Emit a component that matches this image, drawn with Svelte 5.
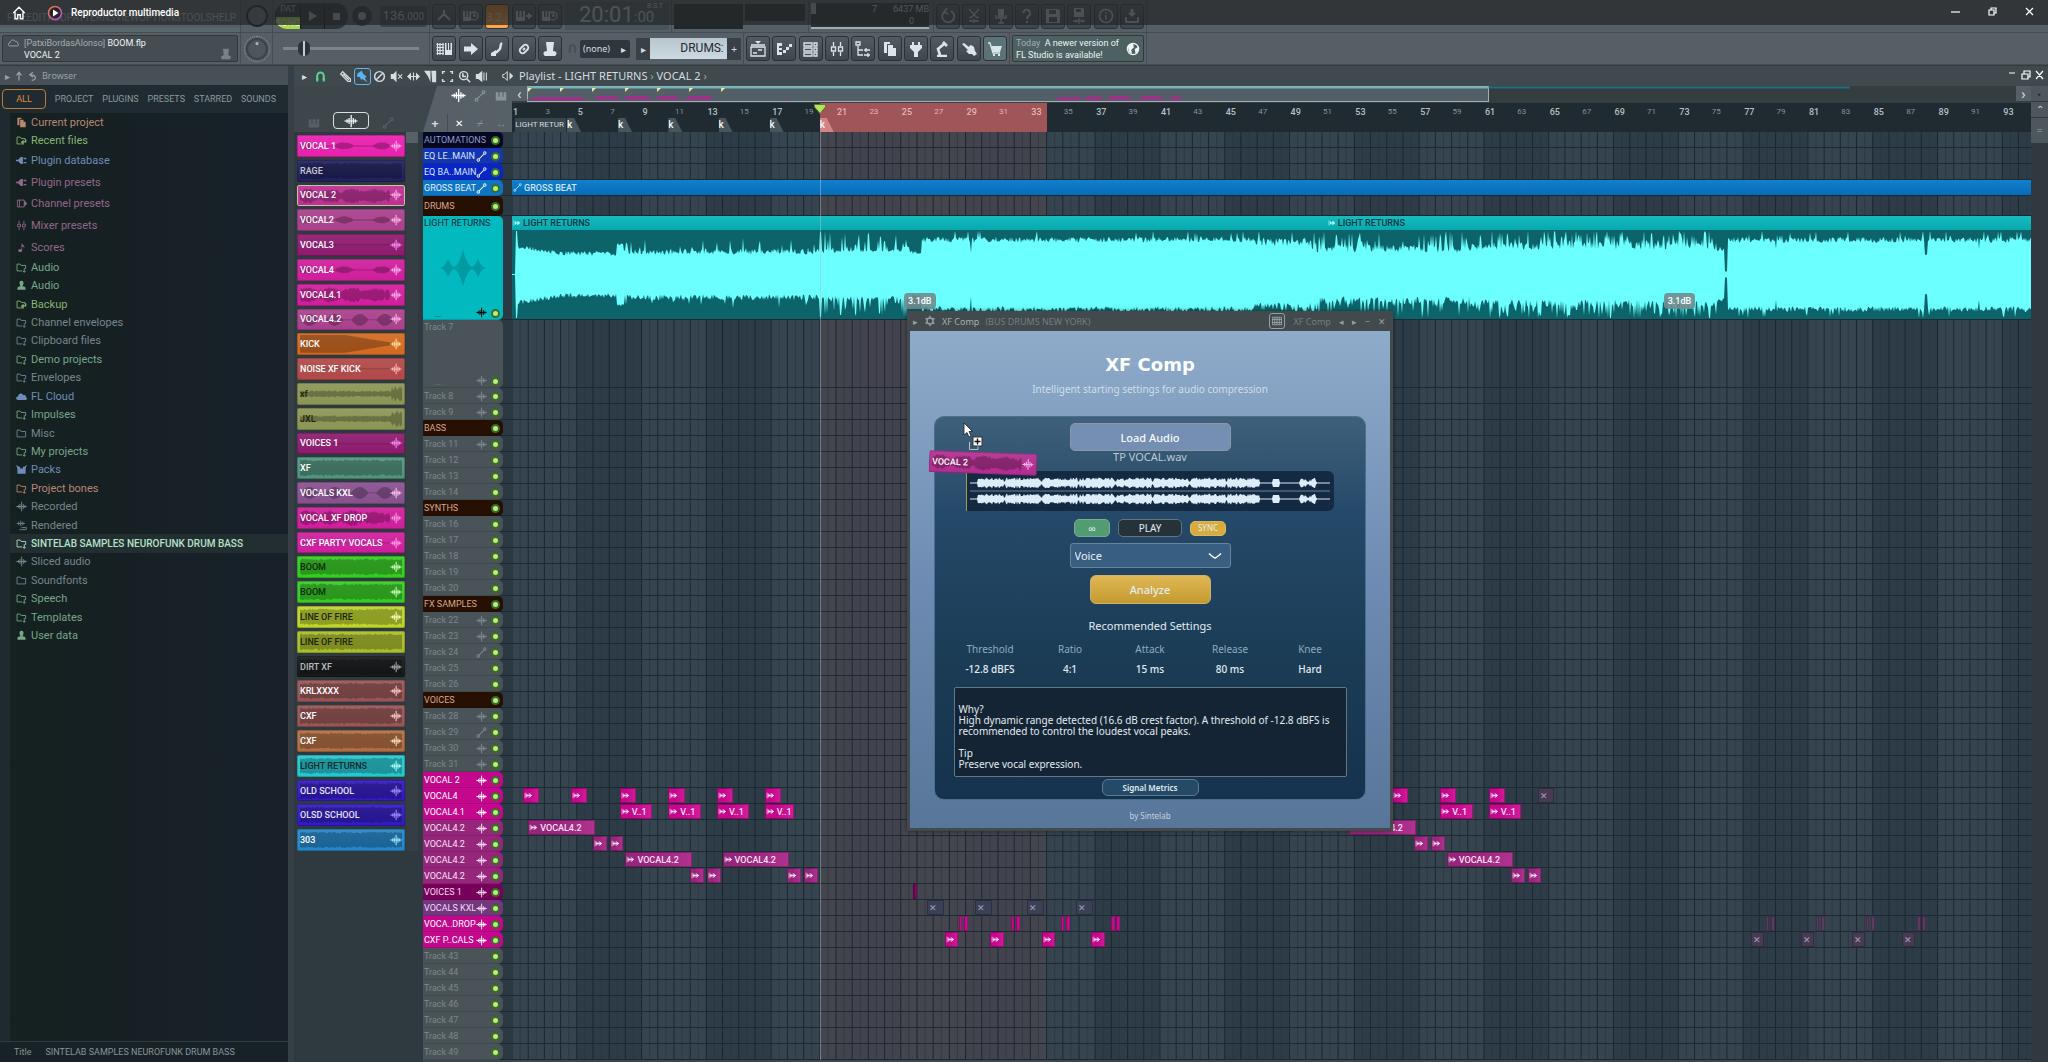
<script>
	const BARS = 93.77;
	const pct = (bars) => (bars / BARS) * 100 + '%';

	// s = stroked path, f = filled path, all on a 16 x 16 box
	const icons = {
		wave: { s: 'M0.5 8H15.5M3.5 6V10M5.800 4.500V11.500M8.200 1V15M10.600 4.500V11.500M12.900 6V10', w: 1.4 },
		node: { s: 'M4.5 11.5L11.5 4.5M1.5 13a1.8 1.8 0 1 0 3.6 0a1.8 1.8 0 1 0-3.6 0M11 3a1.8 1.8 0 1 0 3.6 0a1.8 1.8 0 1 0-3.6 0', w: 1.5 },
		piano: { f: 'M1 3H4.5V9H6V3H10V9H11.5V3H15V14H1Z' },
		pages: { f: 'M2 1H8V3H5V12H2ZM6 4H11V7H14V15H6Z' },
		recent: { s: 'M11 13H1.5V3H6L7.5 5H13V7', f: 'M15 6V11H11V14L7 10L11 7V9H13V6Z' },
		plug: { f: 'M0 7H3L7 3H10V13H7L3 9H0ZM11 4H15V6H11ZM11 10H15V12H11Z' },
		channel: { s: 'M2 3H12V13H2ZM5 3V13', f: 'M12 5H14L16 8L14 11H12Z' },
		mixer: { s: 'M4.5 1V5M2.5 6H6.5V10H2.5ZM4.5 11V15M11.5 1V5M9.5 6H13.5V10H9.5ZM11.5 11V15' },
		note: { f: 'M8 1C9 4 13 5 12 9C11 7 10 6.500 9 6.500V12C9 16 3 15 3 12.500C3 10.500 6 10 8 11Z' },
		folder: { s: 'M1.500 13V3H6L7.500 5H14V10M1.500 13H9M12 9V15M10 13L12 15L14 13' },
		plain: { s: 'M1.500 13V3H6L7.500 5H14V13Z' },
		user: { f: 'M8 1C11 1 11.500 4 10.500 6.500L9.500 9C13 9.500 14 10 14 14H2C2 10 3 9.500 6.500 9L5.500 6.500C4.500 4 5 1 8 1Z' },
		cloud: { f: 'M3 13C-1 13-0.500 8 3 8C3 3 9 2 10.500 6C14 5 15 8 14.500 9C17 10 16 13 14 13Z' },
		outline: { s: 'M3 13C-0.500 13-0.500 8.500 3 8.500C3 4 9 3 10.500 6.500C14 5.500 15 9 14 9.500C16 10.500 15.500 13 14 13Z' },
		packs: { f: 'M0 1L4 4H12L16 1L14 6V14H2V6ZM6 4V7L8 6L10 7V4Z' },
		render: { s: 'M1 5H13M4 2.500V7.500M7 1V9M10 2.500V7.500M5 14H15V11H8' },
		magnet: { s: 'M4 14V7A4 4 0 0 1 12 7V14M2.500 11H5.500M10.500 11H13.500', w: 2.5 },
		pencil: { s: 'M2 5L4.500 2L14 11V14H11ZM4 7L7 4M5 5L12 12', w: 1.6 },
		brush: { f: 'M2 4L7 1L9 5L13 8L11 10L14 15L8 11L6 12L5 9L1 8Z' },
		ban: { s: 'M2 8A6 6 0 1 0 14 8A6 6 0 1 0 2 8M4 12L12 4', w: 1.8 },
		mute: { f: 'M1 5H4L8 1V15L4 11H1Z', s: 'M10 5.500L15 10.500M15 5.500L10 10.500' },
		slip: { f: 'M0 8L5 3V13ZM16 8L11 3V13Z', s: 'M4 8H12M8 3V13' },
		slice: { f: 'M0 1H8V15L5 8ZM9 1H15V15H10Z' },
		select: { s: 'M2 5V2H5M11 2H14V5M14 11V14H11M5 14H2V11', w: 1.8 },
		zoom: { s: 'M2 7A5 5 0 1 0 12 7A5 5 0 1 0 2 7M11 11L15 15', f: 'M7 4V7H10V9H5V4Z', w: 1.8 },
		sound: { f: 'M1 5H4L9 1V15L4 11H1Z', s: 'M11 3V13M14 3V13' },
		speaker: { s: 'M1 6H3L7 2V14L3 10H1Z', f: 'M10 3L15 8L10 13Z' },
		up: { s: 'M8 15V3M4 7L8 2L12 7', w: 2 },
		back: { s: 'M6 15C14 14 14 6 4 6M8 2L3 6L8 10', w: 2 },
		kbd: { s: 'M0.500 3.500H8M0.500 6.500H8M0.500 9.500H8M0.500 12.500H8M1.500 2V14M4 2V14M7 2V14', f: 'M9 2H10.500V9H12V2H13V9H14.500V2H16V14H9Z', w: 1.2 },
		arrow: { f: 'M1 5.500H8V2L15 8L8 14V10.500H1Z' },
		slide: { s: 'M13 2C10 4 13 7 10 9C8 10 9 11 6 12', f: 'M7 9V15H2V12Z', w: 2.4 },
		link: { s: 'M7 9L9 7M6 6L4 8A3 3 0 0 0 8 12L10 10M10 10L12 8A3 3 0 0 0 8 4L6 6', w: 1.8 },
		hat: { f: 'M4 1H12L11 10C15 10 15.500 13 13 15H3C0.500 13 1 10 5 10Z' },
		metro: { s: 'M8 2V8M2 12L8 6L14 12', w: 2 },
		clock: { f: 'M0 3H2V9H3.500V3H5V9H6.500V3H8V13H0Z', s: 'M7 8A4 4 0 1 0 15 8A4 4 0 1 0 7 8M11 5V8H13' },
		addkey: { f: 'M0 3H2V9H3.500V3H5.500V9H7V3H9V13H0Z', s: 'M10 8H16M13 5V11', w: 1.8 },
		undo: { s: 'M4 4A6 6 0 1 0 11 3M7 0L4 4L8 6', w: 1.8 },
		cut: { s: 'M3 1L10 9M13 1L6 9M3 9.500H6M10 9.500H13M3 13H13M8 11V15M5 12V14M11 12V14' },
		savenew: { f: 'M3 0H12L13 1V9H3ZM5 1V4H10V1Z', s: 'M2 13H14M8 10V16M5 11.500V14.500M11 11.500V14.500' },
		mic: { f: 'M5 1H11V9H5Z', s: 'M3 7V10H13V7M8 10V15M5 15H11', w: 1.6 },
		help: { s: 'M4.500 5C4.500 0 12 1 11 6C10.500 8 8 8 8 11M8 13V15', w: 2 },
		save: { f: 'M1 1H13L15 3V15H1ZM4 2V6H11V2ZM4 9V14H12V9Z' },
		info: { s: 'M1.500 8A6.500 6.500 0 1 0 14.500 8A6.500 6.500 0 1 0 1.500 8M8 7V12M8 4V5.500', w: 1.6 },
		down: { f: 'M6.500 1H9.500V5H12L8 9L4 5H6.500Z', s: 'M2 9V14H14V9', w: 2 },
		plist: { s: 'M1 6H15V15H1ZM1 4H15M3 12H7M8 9H12', f: 'M5 0H11L8 3Z' },
		proll: { f: 'M1 2H6V5H3V7H6V9H3V11H6V14H1ZM7 9H10V12H7ZM10 6H13V9H10ZM13 3H16V6H13Z' },
		rack: { s: 'M1 2H9V5H1ZM1 7H9V10H1ZM1 12H9V15H1ZM11 2H14V5H11ZM11 7H14V10H11ZM11 12H14V15H11Z' },
		tree: { s: 'M1 1H5V4H1ZM3 5V14H8M3 9H8M9 9H15M11 7V11M9 14H15M13 12V16' },
		socket: { f: 'M4 1H6V4H10V1H12V4H14V7L10 11V16H6V11L2 7V4H4Z' },
		lamp: { s: 'M3 15H13M6 14L4 8L10 3M9 1L13 5', w: 2.6 },
		hand: { f: 'M1 3L3 2L8 6L9 4L11 4.500L13 6L14 10L16 13L13 15L11 13L8 13L5 10L7 9Z' },
		cart: { f: 'M4 5H15L13 11H6ZM6 13H8V15H6ZM11 13H13V15H11Z', s: 'M1 2H3L6 12H13' },
		globe: { s: 'M1.500 8A6.500 6.500 0 1 0 14.500 8A6.500 6.500 0 1 0 1.500 8', f: 'M2 4L8 1.500L9 6L6 9L7 14L3 11ZM10 8L14.500 5V10L11 14Z' },
		gear: { s: 'M4 8A4 4 0 1 0 12 8A4 4 0 1 0 4 8M8 1V4M8 12V15M2 4.500L4.500 6M11.500 10L14 11.500M2 11.500L4.500 10M11.500 6L14 4.500', w: 2 },
		grid: { s: 'M2 3H14V13H2ZM5 3V13M8 3V13M11 3V13M2 6H14M2 10H14' },
		clip: { s: 'M2 3V13M3 8H14M9 4V12', f: 'M4 4L8 8L4 12ZM10 4L14 8L10 12Z' },
		home: { s: 'M1.500 8L8 1.500L14.500 8M3.500 7V14.500H6.500V10H9.500V14.500H12.500V7', w: 1.6 }
	};

	const BLUE = '#6f8cb8', MAUVE = '#93678c', GREEN = '#76a68a', GREY = '#76868e', LIME = '#86b374', RUST = '#b98673';
	const pinned = [
		['pages', 'Current project', RUST], ['recent', 'Recent files', LIME]
	];
	const presets = [
		['plug', 'Plugin database', BLUE], ['plug', 'Plugin presets', MAUVE], ['channel', 'Channel presets', MAUVE],
		['mixer', 'Mixer presets', MAUVE], ['note', 'Scores', MAUVE]
	];
	const folders = [
		['folder', 'Audio', GREEN], ['user', 'Audio', GREEN], ['recent', 'Backup', LIME], ['folder', 'Channel envelopes', GREY],
		['folder', 'Clipboard files', GREY], ['folder', 'Demo projects', GREEN], ['folder', 'Envelopes', GREY], ['cloud', 'FL Cloud', BLUE],
		['folder', 'Impulses', GREEN], ['plain', 'Misc', GREY], ['folder', 'My projects', GREEN], ['packs', 'Packs', BLUE],
		['folder', 'Project bones', RUST], ['wave', 'Recorded', GREY], ['render', 'Rendered', GREY],
		['folder', 'SINTELAB SAMPLES NEUROFUNK DRUM BASS', '#b5e2cb'], ['wave', 'Sliced audio', GREY], ['plain', 'Soundfonts', GREY],
		['folder', 'Speech', GREEN], ['folder', 'Templates', GREEN], ['user', 'User data', GREEN]
	];

	// name, colour, text colour, wave shape, wave icon colour
	const clipsList = [
		['VOCAL 1', '#e81fae', '#fff', 'dots', '#ffb4ec'], ['RAGE', '#20205f', '#c8c8d8', 'flat', ''],
		['VOCAL 2', '#bc2f94', '#fff', 'blobs', '#ffb4ec'], ['VOCAL2', '#a93f8c', '#fff', 'dots', '#ffb4ec'],
		['VOCAL3', '#8d1a6e', '#fff', 'line', '#ff8cf0'], ['VOCAL4', '#cf1d9c', '#fff', 'dots', '#ffb4ec'],
		['VOCAL4.1', '#cf1d9c', '#fff', 'blobs', '#ffb4ec'], ['VOCAL4.2', '#a93f8c', '#fff', 'pulse', '#ffb4ec'],
		['KICK', '#d2691f', '#fff', 'kick', '#ffe49a'], ['NOISE XF KICK', '#b04848', '#fff', 'line', '#ffb9b9'],
		['xf', '#8b9553', '#1c1f10', 'thin', ''], ['JXL', '#8b9553', '#1c1f10', 'thin', ''],
		['VOICES 1', '#8d1a6e', '#fff', 'line', '#ff8cf0'], ['XF', '#4f947c', '#fff', 'flat', ''],
		['VOCALS KXL', '#87508f', '#fff', 'pulse', '#ffc4f4'], ['VOCAL XF DROP', '#cf1d9c', '#fff', 'blobs', '#ff9ce8'],
		['CXF PARTY VOCALS', '#cf1d9c', '#fff', 'line', '#ff9ce8'], ['BOOM', '#35cc22', '#0c2a08', 'flat', '#c8ffb4'],
		['BOOM', '#35cc22', '#0c2a08', 'flat', '#c8ffb4'], ['LINE OF FIRE', '#bdd42b', '#20250a', 'flat', '#faffb0'],
		['LINE OF FIRE', '#a9bd28', '#20250a', 'flat', ''], ['DIRT XF', '#16191b', '#b8bcbe', 'flat', '#a8a8a8'],
		['KRLXXXX', '#985454', '#fff', 'flat', '#ffc8c8'], ['CXF', '#985454', '#fff', 'flat', '#ffc8c8'],
		['CXF', '#b26c40', '#fff', 'flat', '#ffe0b4'], ['LIGHT RETURNS', '#22c8cf', '#0b2a2c', 'flat', '#a6ffff'],
		['OLD SCHOOL', '#3219c4', '#e4e0ff', 'flat', '#9e8cff'], ['OLSD SCHOOL', '#3219c4', '#e4e0ff', 'flat', '#9e8cff'],
		['303', '#2286ca', '#fff', 'flat', '#9ce8ff']
	];

	const PINK = '#c4078c', PLUM = '#96267c', SECTION = '#260f03';
	const tracks = [
		{ name: 'AUTOMATIONS', bg: '#050820', fg: '#8c98cc' },
		{ name: 'EQ LE..MAIN', bg: '#1436b4', fg: '#dfe6ff', icon: 'node' },
		{ name: 'EQ BA..MAIN', bg: '#0826c8', fg: '#dfe6ff', icon: 'node' },
		{ name: 'GROSS BEAT', bg: '#0e74c4', fg: '#e2f0ff', icon: 'node' },
		{ name: 'DRUMS', h: 20, bg: SECTION, fg: '#dca884' },
		{ name: 'LIGHT RETURNS', h: 104, bg: '#02b9c0', fg: '#06292c', icon: 'wave', tall: true },
		{ name: 'Track 7', h: 68, icon: 'wave', tall: true },
		{ name: 'Track 8', icon: 'wave' }, { name: 'Track 9', icon: 'wave' },
		{ name: 'BASS', bg: SECTION, fg: '#dca884' },
		{ name: 'Track 11', icon: 'wave' }, { name: 'Track 12' }, { name: 'Track 13' }, { name: 'Track 14' },
		{ name: 'SYNTHS', bg: SECTION, fg: '#dca884' },
		{ name: 'Track 16' }, { name: 'Track 17' }, { name: 'Track 18' }, { name: 'Track 19' }, { name: 'Track 20' },
		{ name: 'FX SAMPLES', bg: SECTION, fg: '#dca884' },
		{ name: 'Track 22', icon: 'wave' }, { name: 'Track 23', icon: 'wave' }, { name: 'Track 24', icon: 'node' }, { name: 'Track 25' }, { name: 'Track 26' },
		{ name: 'VOICES', bg: SECTION, fg: '#dca884' },
		{ name: 'Track 28', icon: 'wave' }, { name: 'Track 29', icon: 'node' }, { name: 'Track 30', icon: 'wave' }, { name: 'Track 31', icon: 'wave' },
		{ name: 'VOCAL 2', bg: PINK, fg: '#fff', icon: 'wave' },
		{ name: 'VOCAL4', bg: PINK, fg: '#fff', icon: 'wave', clips: [[0.65, 1], [3.65, 1], [6.65, 1], [9.65, 1], [12.65, 1], [15.6, 1], [54.3, 1], [57.3, 1], [60.3, 1], [63.35, 1, '', 'muted']] },
		{ name: 'VOCAL4.1', bg: PINK, fg: '#fff', icon: 'wave', clips: [[6.65, 2, 'V..1'], [9.65, 2, 'V..1'], [12.65, 2, 'V..1'], [15.6, 1.8, 'V..1'], [57.3, 2, 'V..1'], [60.3, 2, 'V..1']] },
		{ name: 'VOCAL4.2', bg: PLUM, fg: '#f6e2f0', icon: 'wave', clips: [[1, 4.1, 'VOCAL4.2'], [51.7, 4.1, 'VOCAL4.2']] },
		{ name: 'VOCAL4.2', bg: PLUM, fg: '#f6e2f0', icon: 'wave', clips: [[5, 0.85], [6.03, 0.85], [55.7, 0.85], [56.75, 0.85]] },
		{ name: 'VOCAL4.2', bg: PLUM, fg: '#f6e2f0', icon: 'wave', clips: [[7, 4.1, 'VOCAL4.2'], [13, 4.1, 'VOCAL4.2'], [57.7, 4.1, 'VOCAL4.2']] },
		{ name: 'VOCAL4.2', bg: PLUM, fg: '#f6e2f0', icon: 'wave', clips: [[11, 0.85], [12.05, 0.85], [17, 0.85], [18.05, 0.85], [61.7, 0.85], [62.7, 0.85]] },
		{ name: 'VOICES 1', bg: '#76005a', fg: '#f6dcee', icon: 'wave', clips: [[24.75, 0.25, '', 'sliver']] },
		{ name: 'VOCALS KXL', bg: '#74367e', fg: '#f0def4', icon: 'wave', clips: [[25.6, 1.05, '', 'muted blue'], [28.6, 1.05, '', 'muted blue'], [31.8, 1.05, '', 'muted blue'], [34.8, 1.05, '', 'muted blue']] },
		{ name: 'VOCA..DROP', bg: PINK, fg: '#fff', icon: 'wave', clips: [27.6, 30.8, 33.9, 37].flatMap((b) => [[b, 0.2, '', 'sliver'], [b + 0.3, 0.25, '', 'sliver']]).concat([77.4, 80.5, 83.6, 86.75].flatMap((b) => [[b, 0.2, '', 'sliver muted'], [b + 0.3, 0.25, '', 'sliver muted']])) },
		{ name: 'CXF P..CALS', bg: PINK, fg: '#fff', icon: 'wave', clips: [[26.7, 0.85], [29.5, 0.85], [32.7, 0.85], [35.75, 0.85], [76.5, 0.8, '', 'muted'], [79.6, 0.8, '', 'muted'], [82.7, 0.8, '', 'muted'], [85.8, 0.8, '', 'muted']] },
		{ name: 'Track 43' }, { name: 'Track 44' }, { name: 'Track 45' }, { name: 'Track 46' }, { name: 'Track 47' }, { name: 'Track 48' }, { name: 'Track 49' }
	];

	const numbers = Array.from({ length: 47 }, (_, i) => i * 2 + 1);
	const flags = [3.4, 6.55, 9.65, 12.75, 15.9, 19];
	const bars = Array.from({ length: 94 }, (_, i) => i);

	function noise(seed) {
		let n = seed * 7919 + 13;
		return () => {
			n = (n * 16807) % 2147483647;
			return n / 2147483647;
		};
	}

	function level(x, r) {
		const spike = r() < 0.1 ? r() * 12 : 0;
		if (x < 4) return 0.5;
		if (x < 6) return 44;
		if (x < 105) return 23 - x / 12 + Math.abs(50 - x) / 12 + r() * 5;
		if (x < 112) return 29 + r() * 3;
		if (x < 308) return 20 + r() * 6 + spike;
		if (x < 310) return 43;
		if (x < 400) return 22 + r() * 4 + (r() < 0.4 ? r() * 19 : 0);
		if (x < 410) return 20 + r() * 4;
		if (x === 459) return 22;
		if (x < 740) return 32 + r() * 6 + spike;
		if (x < 800) return 28 + r() * 9 + spike;
		if (x < 960) return 22 + r() * 8 + (r() < 0.35 ? r() * 18 : 0);
		if (x < 1205) return 25 + r() * 8 + (r() < 0.5 ? r() * 16 : 0);
		if (x < 1213) return 24 + r() * 5;
		if (x < 1216) return 3;
		if (Math.abs(x - 1414) < 2) return 20;
		if (x === 1264 || x === 1467) return 26;
		return 32 + r() * 6 + spike;
	}

	function bigWave() {
		const r = noise(4);
		let top = 'M0 45';
		let bottom = '';
		for (let x = 0; x < 1520; x++) {
			top += `L${x} ${(45 - Math.min(44, level(x, r))).toFixed(1)}`;
			bottom = `L${x} ${(45 + Math.min(44, level(x, r))).toFixed(1)}` + bottom;
		}
		return top + bottom + 'Z';
	}

	const shapes = {
		flat: (x, r) => 6.5 + r() * 2,
		thin: (x, r) => (x > 94 ? 4 + r() * 4 : 2 + r() * 1.5),
		line: () => 0.4,
		dots: (x, r) => (x > 92 ? 0.5 : Math.max(0.5, Math.sin(x / 6) * 3 + r())),
		blobs: (x, r) => (x > 92 ? 1 : 2 + Math.abs(Math.sin(x / 7)) * 3 + r() * 3),
		pulse: (x) => Math.max(0.4, Math.abs(Math.sin(x / 8)) * 11 - 5),
		kick: (x) => (x < 48 ? 9 : Math.max(0.5, 9 - (x - 48) / 6))
	};

	function miniWave(kind, seed) {
		const r = noise(seed + 2);
		let top = 'M3 11';
		let bottom = '';
		for (let x = 3; x < 106; x++) {
			const a = shapes[kind](x, r);
			top += `L${x} ${(11 - a).toFixed(1)}`;
			bottom = `L${x} ${(11 + a).toFixed(1)}` + bottom;
		}
		return top + bottom + 'Z';
	}

	function voiceWave(mid) {
		const r = noise(9);
		let top = `M3 ${mid}`;
		let bottom = '';
		for (let x = 3; x < 364; x++) {
			let a = 0.4;
			if (x > 10 && x < 293) a = x % 37 < 2 ? 1.5 : 2.5 + r() * 3;
			if (x > 305 && x < 313) a = 4;
			if (x > 332 && x < 350) a = 1 + r() * 4;
			top += `L${x} ${(mid - a).toFixed(1)}`;
			bottom = `L${x} ${(mid + a).toFixed(1)}` + bottom;
		}
		return top + bottom + 'Z';
	}

	const settings = [['Threshold', '-12.8 dBFS'], ['Ratio', '4:1'], ['Attack', '15 ms'], ['Release', '80 ms'], ['Knee', 'Hard']];
	let source = $state('Voice');
	let selected = $state(2);
	let volume = $state(12);
</script>

{#snippet icon(name, size = 14)}
	<svg class="icon" width={size} height={size} viewBox="0 0 16 16" aria-hidden="true">
		{#if icons[name].f}<path d={icons[name].f} fill="currentColor" fill-rule="evenodd" />{/if}
		{#if icons[name].s}<path d={icons[name].s} fill="none" stroke="currentColor" stroke-width={icons[name].w ?? 1.3} />{/if}
	</svg>
{/snippet}

{#snippet entry([glyph, label, color], open = false)}
	<li><a href="#browse" class:open style="color: {color}">{@render icon(glyph, 11)}<span>{label}</span></a></li>
{/snippet}

{#snippet pad(glyph)}
	<button class="pad" aria-label={glyph}>{@render icon(glyph, 16)}</button>
{/snippet}

{#snippet sample([name, bg, fg, kind, mark], i)}
	<svg class="mini" viewBox="0 0 108 22" preserveAspectRatio="none" aria-hidden="true"><path d={miniWave(kind, i)} /></svg>
	<span>{name}</span>
	{#if mark}<i style="color: {mark}">{@render icon('wave', 12)}</i>{/if}
{/snippet}

<div class="daw">
	<header class="top">
		<div class="row dim">
			<nav class="menu"><span>FILE</span><span>EDIT</span><span>ADD</span><span>PATTERNS</span><span>VIEW</span><span>OPTIONS</span><span>TOOLS</span><span>HELP</span></nav>
			<div class="seg knob-seg"><div class="knob big"></div></div>
			<div class="seg transport">
				<div class="pill">
					<button class="mode"><small>PAT</small><b>SONG</b></button>
					<button aria-label="Play"><svg width="8" height="10"><path d="M0 0L8 5L0 10Z" fill="currentColor" /></svg></button>
					<button aria-label="Stop"><svg width="7" height="7"><rect width="7" height="7" fill="currentColor" /></svg></button>
				</div>
				<button class="rec" aria-label="Record"></button>
				<output class="tempo">136<small>.000</small></output>
			</div>
			<div class="seg modes">
				<div class="pads">{@render pad('metro')}{@render pad('clock')}<button class="pad hot">3.2.:</button>{@render pad('addkey')}{@render pad('clock')}</div>
				<output class="time">20:01<small>:00</small><sup>B:S:T</sup></output>
			</div>
			<div class="seg scopes"><div class="scope"></div><div class="scope short"></div></div>
			<div class="seg cpu"><div class="meter"><i></i><span>7</span><span>6437 MB</span><b>0</b></div></div>
			<div class="seg pads last">{@render pad('undo')}{@render pad('cut')}{@render pad('mic')}{@render pad('help')}{@render pad('save')}{@render pad('savenew')}{@render pad('info')}{@render pad('down')}</div>
		</div>
		<div class="row">
			<div class="menu hint">
				<div class="panel">
					<span>{@render icon('outline', 11)}</span>
					<p><span>[PatxiBordasAlonso]</span> BOOM.flp<br />VOCAL 2</p>
					<i>{@render icon('hat', 12)}</i>
				</div>
			</div>
			<div class="seg knob-seg"><div class="knob"></div></div>
			<div class="seg transport"><input class="volume" type="range" min="0" max="100" bind:value={volume} aria-label="Song position" /></div>
			<div class="seg patterns">
				<div class="pads">{@render pad('kbd')}{@render pad('arrow')}{@render pad('slide')}{@render pad('link')}{@render pad('hat')}</div>
				<span class="faint">{@render icon('magnet', 11)}</span>
				<button class="snap"><span>(none)</span><em>▸</em></button>
				<div class="pattern"><button>▸</button><span>DRUMS<small>⁚</small></span><button>+</button></div>
			</div>
			<div class="seg pads tools">{@render pad('plist')}{@render pad('proll')}{@render pad('rack')}{@render pad('mixer')}{@render pad('tree')}{@render pad('pages')}{@render pad('socket')}{@render pad('lamp')}{@render pad('hand')}<span class="shop">{@render pad('cart')}</span></div>
			<div class="seg news"><div class="panel"><p><span>Today</span>&nbsp; A newer version of<br />FL Studio is available!</p>{@render icon('globe', 14)}</div></div>
		</div>
		<div class="osbar">
			{@render icon('home', 14)}
			<svg class="player" width="16" height="16" viewBox="0 0 16 16" aria-hidden="true">
				<defs><linearGradient id="ring" x1="0" y1="0" x2="1" y2="1"><stop offset="0" stop-color="#f07a2c" /><stop offset="1" stop-color="#a050e0" /></linearGradient></defs>
				<circle cx="8" cy="8" r="6.500" fill="#2a2430" stroke="url(#ring)" stroke-width="1.600" /><path d="M6 4.500L11.500 8L6 11.500Z" fill="#fff" />
			</svg>
			<strong>Reproductor multimedia</strong>
			<div class="oswin">
				<button aria-label="Minimise"><svg width="9" height="9"><path d="M0 5H9" /></svg></button>
				<button aria-label="Restore"><svg width="9" height="9"><path d="M1 3H6V8H1ZM3 3V1H8V6H6" /></svg></button>
				<button aria-label="Close"><svg width="9" height="9"><path d="M1 1L8 8M8 1L1 8" /></svg></button>
			</div>
		</div>
	</header>

	<main>
		<aside class="browser">
			<div class="bhead"><em>▸</em>{@render icon('up', 10)}{@render icon('back', 10)}<span>Browser</span></div>
			<div class="tabs"><button class="on">ALL</button><button>PROJECT</button><button>PLUGINS</button><button>PRESETS</button><button>STARRED</button><button>SOUNDS</button></div>
			<div class="list">
				<ul class="pinned">{#each pinned as item}{@render entry(item)}{/each}</ul>
				<ul class="presets">{#each presets as item}{@render entry(item)}{/each}</ul>
				<ul class="folders">{#each folders as item, i}{@render entry(item, i === 15)}{/each}</ul>
			</div>
			<footer><span>Title</span><span>SINTELAB SAMPLES NEUROFUNK DRUM BASS</span></footer>
		</aside>

		<section class="playlist">
			<div class="ptitle">
				<div class="ptools">
					<em>▸</em><span class="green">{@render icon('magnet', 13)}</span>
					{@render icon('pencil', 13)}<span class="boxed">{@render icon('brush', 13)}</span>{@render icon('ban', 13)}{@render icon('mute', 13)}{@render icon('slip', 13)}{@render icon('slice', 13)}{@render icon('select', 13)}{@render icon('zoom', 13)}{@render icon('sound', 13)}
				</div>
				{@render icon('speaker', 12)}
				<h1>Playlist - LIGHT RETURNS <em>›</em> VOCAL 2 <em>›</em></h1>
				<div class="wbtns"><svg width="36" height="10" aria-hidden="true"><path d="M1 3H7M14 4H20V9H14ZM16 4V1H22V7H20M28 1L35 9M35 1L28 9" /></svg></div>
			</div>

			<div class="pbody">
				<div class="picker">
					<div class="phead"><span>{@render icon('piano', 12)}</span><button aria-label="Audio clips">{@render icon('wave', 14)}</button><span>{@render icon('node', 12)}</span></div>
					<div class="pcols">
						<div class="samples">
							{#each clipsList as c, i}
								<button class:sel={selected === i} style="background-color: {c[1]}; color: {c[2]}" onclick={() => (selected = i)}>{@render sample(c, i)}</button>
							{/each}
						</div>
						<div class="pscroll"><i></i></div>
					</div>
				</div>

				<div class="arrange">
					<div class="ahead">
						<div class="corner">
							<b>+</b>
							<div><span class="lit">{@render icon('wave', 15)}</span>{@render icon('node', 12)}{@render icon('piano', 12)}<span class="lit">✕</span><span>⌿</span><span>↔</span></div>
						</div>
						<div class="timeline">
							<div class="minimap">
								<button>‹</button>
								<div class="track">
									<div class="view"></div>
									<svg viewBox="0 0 1488 16" preserveAspectRatio="none" aria-hidden="true">
										<path d="M0 1.500H961" stroke="#70b4bc" stroke-width="2" /><path d="M961 1.500H1322" stroke="#1f6f7d" stroke-width="2" />
										<path d="M6 12.500H45M40 12.500H56M68 11.500H90M98 11.500H122M130 11.500H150M160 11.500H184M530 12.500H554M558 12H574M582 11.500H602M614 11.500H634M644 12H654" stroke="#c41c98" stroke-width="2" />
										<path d="M0 14H60M70 14H186M256 14H262M560 14H650" stroke="#8e3a86" stroke-width="1" />
										{#each [1, 33, 65, 98, 130, 162, 194] as x}<path d="M{x} 2H{x + 4}L{x} 6Z" fill="#f0eca0" />{/each}
									</svg>
								</div>
								<button>›</button>
							</div>
							<div class="ruler">
								<div class="range"></div>
								<span class="marker" style="left: {pct(0.2)}; width: {pct(3.15)}">LIGHT RETUR</span>
								{#each flags as f}<span class="flag" class:red={f === 19} style="left: {pct(f)}">k</span>{/each}
								{#each numbers as n}<span class="num" class:major={n % 4 === 1} class:inrange={n > 20 && n < 34} style="left: {pct(n - 1)}">{n}</span>{/each}
								<svg class="head" width="12" height="10"><path d="M0.500 0.500H11.500V3L6 9.500L0.500 3Z" fill="#b4e262" stroke="#5c7a2c" /></svg>
							</div>
						</div>
					</div>

					<div class="tracks">
						<svg class="grid" viewBox="0 0 {BARS} 1" preserveAspectRatio="none" aria-hidden="true">
							{#each bars as b}
								{#if b % 8 >= 4}<rect x={b} y="0" width="1" height="1" fill="#2e3c47" />{/if}
							{/each}
							<rect x="19" y="0" width="14" height="1" fill="#4b464f" fill-opacity="0.750" />
							{#each bars as b}
								<path d="M{b + 0.5} 0V1" stroke="#25333d" stroke-width="1" stroke-opacity="0.600" vector-effect="non-scaling-stroke" />
								<path d="M{b} 0V1" stroke="#1a2832" stroke-width="1" vector-effect="non-scaling-stroke" />
							{/each}
						</svg>
						{#each tracks as t, i}
							<div class="trackrow" style="height: {t.h ?? 16}px">
								<div class="thead" class:tall={t.tall} class:plain={!t.bg} style={t.bg ? `background-color: ${t.bg}; color: ${t.fg}` : ''}>
									<span>{t.name}</span>
									{#if i === 5}<svg class="emblem" width="46" height="36" viewBox="0 0 46 36" aria-hidden="true"><path d="M0 18Q5 17 8 9Q11 16 14 17Q19 15 23 0Q27 15 32 17Q35 16 38 9Q41 17 46 18Q41 19 38 27Q35 20 32 19Q27 21 23 36Q19 21 14 19Q11 20 8 27Q5 19 0 18Z" fill="#009aa2" /></svg>{/if}
									{#if t.tall}<small>...</small>{/if}
									{#if t.icon}<i class:black={i === 5}>{@render icon(t.icon, 11)}</i>{/if}
									<b class="led"></b>
								</div>
								<div class="lane">
									{#if i === 3}
										<div class="auto"><i>{@render icon('node', 9)}</i>GROSS BEAT</div>
									{:else if i === 5}
										<div class="audio">
											<div class="names"><span style="width: {pct(50.3)}">{@render icon('clip', 8)}LIGHT RETURNS</span><span>{@render icon('clip', 8)}LIGHT RETURNS</span></div>
											<svg viewBox="0 0 1519 90" preserveAspectRatio="none" aria-hidden="true"><path d={bigWave()} fill="#6cffff" /></svg>
										</div>
										<span class="gain" style="left: {pct(24.2)}">3.1dB</span>
										<span class="gain" style="left: {pct(71.1)}">3.1dB</span>
									{/if}
									{#each t.clips ?? [] as [at, len, label, kind]}
										<div class="clip {kind ?? ''}" style="left: {pct(at)}; width: {pct(len)}; background-color: {kind?.includes('muted') ? '' : t.bg}">
											{#if kind?.includes('sliver')}{:else if kind}✕{:else}{@render icon('clip', 9)}{label ?? ''}{/if}
										</div>
									{/each}
								</div>
							</div>
						{/each}
						<div class="overlay"><div class="playhead"></div></div>
					</div>
				</div>

				<div class="vscroll"><button class="dot">▪</button><button>⌃</button><div>=</div></div>
			</div>
		</section>
	</main>

	<section class="plugin">
		<div class="plugbar">
			<em>▸</em>{@render icon('gear', 12)}<b>XF Comp</b> <span>(BUS DRUMS NEW YORK)</span>
			<div><i>{@render icon('grid', 12)}</i><span>XF Comp</span><em>◂</em><em>▸</em><em>−</em><em>✕</em></div>
		</div>
		<div class="face">
			<h2>XF Comp</h2>
			<p class="tag">Intelligent starting settings for audio compression</p>
			<div class="card">
				<button class="load">Load Audio</button>
				<p class="file">TP VOCAL.wav</p>
				<div class="preview"><svg viewBox="0 0 367 40" preserveAspectRatio="none" aria-hidden="true"><path d={voiceWave(12)} /><path d={voiceWave(28)} /><path d="M3 20H363" stroke="#6b8496" stroke-width="1" /></svg></div>
				<div class="play"><button class="loop">∞</button><button class="go">PLAY</button><button class="sync">SYNC</button></div>
				<div class="pick">
					<select bind:value={source} aria-label="Source type"><option>Voice</option><option>Drums</option><option>Bass</option></select>
					<svg width="14" height="8" aria-hidden="true"><path d="M1 1.500Q6 6 7 6Q8 6 13 1.500" /></svg>
				</div>
				<button class="analyze">Analyze</button>
				<h3>Recommended Settings</h3>
				<dl>{#each settings as [k, v]}<div><dt>{k}</dt><dd>{v}</dd></div>{/each}</dl>
				<div class="why"><p>Why?<br />High dynamic range detected (16.6 dB crest factor). A threshold of -12.8 dBFS is recommended to control the loudest vocal peaks.</p><p>Tip<br />Preserve vocal expression.</p></div>
				<button class="metrics">Signal Metrics</button>
			</div>
			<p class="by">by Sintelab</p>
		</div>
	</section>

	<div class="dragged">{@render sample(clipsList[2], 2)}</div>
	<svg class="cursor" width="20" height="30" viewBox="0 0 20 30" aria-hidden="true">
		<path d="M1 1V13L4 10.500L6 15L8 14L6 9.500H9.500Z" fill="#fff" stroke="#222" stroke-width="0.800" />
		<path d="M6.500 20V27.500H15V24" fill="none" stroke="#b8c4cc" /><rect x="10" y="15" width="9" height="9" fill="#fff" stroke="#333" /><path d="M14.500 16.500V22.500M11.500 19.500H17.500" stroke="#111" stroke-width="1.400" />
	</svg>
</div>

<style>
	:global(body) {
		margin: 0;
		background: #1a2226;
	}

	.daw {
		position: relative;
		display: flex;
		flex-direction: column;
		min-height: 100vh;
		overflow: hidden;
		background: #1d262b;
		color: #d5dde0;
		font-family: 'Noto Sans', 'Open Sans', sans-serif;
		font-size: 10px;
	}

	button {
		padding: 0;
		border: 0;
		background: none;
		color: inherit;
		font: inherit;
	}

	p, h1, h2, h3, ul, dl, dd {
		margin: 0;
		padding: 0;
		font-weight: 400;
	}

	em, i {
		font-style: normal;
	}

	.icon {
		display: block;
		flex: none;
	}

	/* toolbar */
	.top {
		position: relative;
		background: #575f66;
		border-bottom: 1px solid #33393d;
	}

	.row {
		display: flex;
		box-sizing: border-box;
		height: 33px;
		border-bottom: 1px solid #454c52;
	}

	.row + .row {
		height: 32px;
	}

	.menu {
		display: flex;
		align-items: center;
		justify-content: space-between;
		box-sizing: border-box;
		width: 240px;
		padding: 6px 5px 0 7px;
		font: 10px 'Roboto', sans-serif;
		color: #c0c8cc;
		border-bottom: 4px solid #58696d;
	}

	.menu.hint {
		padding: 2px;
		border: 0;
	}

	.seg {
		display: flex;
		align-items: center;
		box-sizing: border-box;
		padding: 0 2px;
		border-left: 1px solid #464d53;
	}

	.knob-seg {
		justify-content: center;
		width: 32px;
	}

	.knob {
		width: 18px;
		height: 18px;
		border: 2px solid #3c4348;
		border-radius: 50%;
		outline: 1px dotted #8b959b;
		outline-offset: 1px;
		background: radial-gradient(circle at 50% 20%, #aab4ba 0 1px, #4d565c 2px);
	}

	.knob.big {
		outline: 0;
		border-color: #1e2224;
		background: #6b7379;
	}

	.transport {
		width: 157px;
		gap: 4px;
	}

	.pill {
		display: flex;
		width: 80px;
		height: 26px;
		overflow: hidden;
		border-radius: 12px;
		background: #2e3336;
		color: #aab0b4;
	}

	.pill button {
		display: flex;
		align-items: center;
		justify-content: center;
		flex: 1;
		border-left: 1px solid #16191b;
	}

	.pill .mode {
		display: block;
		font: 9px/11px 'Roboto', sans-serif;
	}

	.mode small, .mode b {
		display: block;
		font-size: 9px;
		font-weight: 400;
	}

	.mode b {
		margin-top: 2px;
		background: #a8dc50;
		color: #e9fbc8;
		line-height: 12px;
	}

	.rec {
		width: 20px;
		height: 20px;
		border: 6px solid #2e3336;
		border-radius: 50%;
		background: #a4aaae;
	}

	.tempo {
		margin-left: 4px;
		padding: 0 3px;
		border-radius: 3px;
		background: #3c4347;
		color: #b9c0c4;
		font: 13px/20px 'Roboto', sans-serif;
	}

	.tempo small {
		font-size: 10px;
	}

	.pads {
		display: flex;
		align-items: center;
		justify-content: space-between;
	}

	.pad {
		display: flex;
		align-items: center;
		justify-content: center;
		box-sizing: border-box;
		width: 24px;
		height: 25px;
		border: 1px solid #2b3135;
		border-radius: 3px;
		background: linear-gradient(#525b61, #3f474d);
		color: #dbe6ea;
	}

	.dim .pad {
		color: #c4cacd;
	}

	.shop .pad {
		background: #5b7277;
	}

	.pad.hot {
		background: linear-gradient(#e07a1c, #ffa94c);
		color: #ffd9a0;
		font-size: 11px;
	}

	.modes, .patterns {
		width: 314px;
	}

	.modes {
		width: 242px;
		justify-content: space-between;
	}

	.modes .pads, .patterns .pads {
		width: 130px;
	}

	.time {
		position: relative;
		box-sizing: border-box;
		width: 104px;
		padding-left: 14px;
		background: #47555a;
		color: #c8d2d4;
		font: 22px/25px 'Roboto', sans-serif;
	}

	.time small {
		font-size: 15px;
	}

	.time sup {
		position: absolute;
		top: -8px;
		right: 6px;
		font-size: 7px;
	}

	.scopes {
		width: 137px;
		gap: 2px;
		align-items: flex-start;
		padding-top: 4px;
	}

	.scope {
		width: 69px;
		height: 25px;
		background: #23282a;
	}

	.scope.short {
		width: 60px;
		height: 17px;
	}

	.cpu {
		width: 125px;
	}

	.meter {
		position: relative;
		display: flex;
		justify-content: flex-end;
		gap: 16px;
		width: 118px;
		height: 24px;
		border-bottom: 2px solid #a4abae;
		background: #2a2f31;
		color: #d4dadd;
		font: 9px/12px 'Roboto', sans-serif;
	}

	.meter i {
		width: 5px;
		height: 11px;
		margin-right: auto;
		background: #a8afb2;
	}

	.meter b {
		position: absolute;
		right: 15px;
		bottom: 0;
		font-weight: 400;
	}

	.last {
		width: 214px;
		border-right: 1px solid #464d53;
	}

	.tools {
		width: 266px;
	}

	.panel {
		display: flex;
		align-items: flex-start;
		gap: 5px;
		box-sizing: border-box;
		width: 100%;
		height: 27px;
		padding: 1px 5px;
		border: 1px solid #31373b;
		border-radius: 2px;
		background: #454d53;
		color: #eef4f6;
		font: 9px/12px 'Roboto', sans-serif;
		white-space: nowrap;
	}

	.panel p {
		flex: 1;
	}

	.panel span {
		color: #a4adb2;
	}

	.hint i {
		align-self: flex-end;
		color: #78828a;
	}

	.news {
		width: 138px;
		border-right: 1px solid #464d53;
	}

	.news .panel {
		align-items: center;
		padding: 0 3px;
		background: #4d6062;
	}

	.volume {
		width: 138px;
		height: 16px;
		margin: 0 8px;
		appearance: none;
		background: linear-gradient(#7b858b, #7b858b) center / 100% 3px no-repeat;
	}

	.volume::-webkit-slider-thumb {
		width: 12px;
		height: 15px;
		appearance: none;
		border-radius: 6px;
		background: linear-gradient(90deg, #2c3236 5px, #c6ced2 5px 7px, #2c3236 7px);
	}

	.faint {
		margin: 0 2px 0 5px;
		color: #464e54;
	}

	.snap {
		display: flex;
		align-items: center;
		justify-content: space-between;
		width: 50px;
		height: 18px;
		padding: 0 4px 0 3px;
		border-radius: 2px;
		background: #30373c;
	}

	.snap span {
		font-size: 9px;
	}

	.pattern {
		display: flex;
		align-items: center;
		flex: 1;
		margin-left: 6px;
	}

	.pattern button {
		width: 14px;
		height: 22px;
		background: #394147;
	}

	.pattern span {
		flex: 1;
		padding-right: 4px;
		background: linear-gradient(#b9c6ce, #cdd9e0);
		color: #1f2a30;
		font: 12px/20px 'Roboto', sans-serif;
		text-align: right;
	}

	.osbar {
		position: absolute;
		inset: 0 0 auto 0;
		display: flex;
		align-items: center;
		height: 25px;
		padding: 0 14px 0 12px;
		background: rgba(38, 40, 41, 0.75);
		color: #fff;
		font-family: 'Roboto', sans-serif;
	}

	.osbar .player {
		margin: 0 8px 0 21px;
	}

	.osbar strong {
		font-weight: 500;
	}

	.oswin {
		display: flex;
		gap: 28px;
		margin-left: auto;
	}

	.oswin path, .wbtns path {
		fill: none;
		stroke: #fff;
		stroke-width: 1.2;
	}

	/* browser */
	main {
		display: flex;
		flex: 1;
	}

	.browser {
		display: flex;
		flex-direction: column;
		flex: none;
		width: 288px;
		background: #1f292f;
		border-right: 6px solid #353f45;
	}

	.bhead {
		display: flex;
		align-items: center;
		gap: 4px;
		height: 19px;
		padding-left: 5px;
		background: #465056;
		color: #98a2a7;
	}

	.bhead span {
		font-size: 9px;
	}

	.tabs {
		display: flex;
		align-items: center;
		justify-content: space-between;
		height: 28px;
		padding: 0 12px 0 2px;
		background: #202b31;
		color: #8c989e;
		font: 9px 'Roboto', sans-serif;
	}

	.tabs .on {
		width: 44px;
		height: 20px;
		border: 1px solid #c07a38;
		border-radius: 4px;
		color: #e08c3c;
	}

	.list {
		flex: 1;
		margin-left: 10px;
		background: linear-gradient(90deg, #152020, #18212a);
	}

	.list ul {
		display: flex;
		flex-direction: column;
		list-style: none;
	}

	.pinned {
		height: 37px;
	}

	.presets {
		height: 108px;
	}

	.folders {
		height: 387px;
	}

	.list li {
		flex: 1;
		display: flex;
	}

	.list a {
		flex: 1;
		display: flex;
		align-items: center;
		gap: 4px;
		padding-left: 6px;
		font: 11px 'Roboto', sans-serif;
		text-decoration: none;
	}

	.list .open {
		background: #222e2f;
		font-size: 10px;
		font-weight: 500;
	}

	.browser footer {
		display: flex;
		gap: 14px;
		height: 20px;
		padding-left: 14px;
		border-top: 1px solid #2e3a40;
		background: #182126;
		color: #88949a;
		font: 9px/20px 'Roboto', sans-serif;
	}

	/* playlist */
	.playlist {
		display: flex;
		flex-direction: column;
		flex: 1;
		min-width: 0;
		background: #3c464c;
	}

	.ptitle {
		display: flex;
		align-items: center;
		height: 20px;
		padding-right: 4px;
		background: #3f494e;
	}

	.ptools {
		display: flex;
		align-items: center;
		gap: 4px;
		width: 208px;
		padding-left: 8px;
		box-sizing: border-box;
	}

	.ptools .green {
		margin: 0 8px 0 3px;
		color: #58d68c;
	}

	.boxed {
		margin: 0 -2px;
		padding: 1px;
		border: 1px solid #66b4e4;
		border-radius: 3px;
		color: #58b4f0;
	}

	.ptitle h1 {
		margin-left: 5px;
		font-size: 11px;
		line-height: 16px;
	}

	.ptitle h1 em {
		color: #98a2a7;
	}

	.wbtns {
		margin-left: auto;
	}

	.pbody {
		display: flex;
		flex: 1;
	}

	.picker {
		flex: none;
		width: 129px;
		background: #2e3940;
	}

	.phead {
		display: flex;
		align-items: flex-end;
		justify-content: center;
		gap: 13px;
		box-sizing: border-box;
		height: 46px;
		padding: 0 15px 3px 0;
		background: #3c464b;
		color: #566066;
	}

	.phead button {
		display: flex;
		align-items: center;
		justify-content: center;
		width: 36px;
		height: 17px;
		border: 1px solid #d9dfe2;
		border-radius: 4px;
		color: #fff;
	}

	.pcols {
		display: flex;
		gap: 1px;
		padding-left: 3px;
	}

	.samples {
		display: grid;
		grid-auto-rows: 1fr;
		gap: 3px;
		width: 108px;
		height: 716px;
		padding-top: 3px;
	}

	.samples button, .dragged {
		position: relative;
		display: flex;
		align-items: center;
		justify-content: space-between;
		box-sizing: border-box;
		overflow: hidden;
		padding: 0 3px;
		border-radius: 2px;
		background-image: linear-gradient(rgba(255, 255, 255, 0.08), transparent);
		box-shadow: inset 0 0 0 1px rgba(0, 0, 0, 0.2);
		font: 500 9px 'Roboto', sans-serif;
		white-space: nowrap;
	}

	.samples .sel {
		box-shadow: inset 0 0 0 1px #c8c890;
	}

	.samples span, .samples i, .dragged span, .dragged i {
		position: relative;
	}

	.mini {
		position: absolute;
		inset: 0;
		width: 100%;
		height: 100%;
		fill: rgba(0, 0, 0, 0.26);
	}

	.pscroll {
		width: 12px;
		background: #343e44;
	}

	.pscroll i {
		display: block;
		height: 11px;
		background: #566066;
	}

	.arrange {
		flex: 1;
		min-width: 0;
	}

	.ahead {
		display: flex;
		height: 46px;
	}

	.corner {
		display: flex;
		flex: none;
		width: 89px;
		background: #566066;
		clip-path: polygon(14px 0, 100% 0, 100% 100%, 0 100%);
	}

	.corner b {
		align-self: flex-end;
		width: 24px;
		text-align: center;
		border-right: 1px solid #434d53;
		font-size: 13px;
	}

	.corner div {
		display: grid;
		flex: 1;
		grid-template: 1fr 1fr / repeat(3, 1fr);
		place-items: center;
		gap: 8px 0;
		color: #89949a;
	}

	.corner .lit {
		color: #fff;
	}

	.timeline {
		flex: 1;
		min-width: 0;
		display: flex;
		flex-direction: column;
	}

	.minimap {
		display: flex;
		height: 17px;
		background: #343d40;
	}

	.minimap button {
		width: 15px;
		height: 15px;
		background: #566066;
		line-height: 12px;
		font-size: 14px;
	}

	.minimap .track {
		position: relative;
		flex: 1;
	}

	.minimap svg {
		position: absolute;
		inset: 0;
		width: 100%;
		height: 16px;
	}

	.view {
		box-sizing: border-box;
		width: 64.6%;
		height: 16px;
		border: 1px solid #a4b0b4;
		background: #535f66;
	}

	.ruler {
		position: relative;
		flex: 1;
		overflow: hidden;
		background: #202b31;
		font: 9px 'Roboto', sans-serif;
	}

	.ruler span {
		position: absolute;
	}

	.range {
		position: absolute;
		top: 0;
		bottom: 0;
		left: calc(100% * 19 / 93.77);
		width: calc(100% * 14 / 93.77);
		background: #a05558;
	}

	.num {
		top: 4px;
		padding-left: 1px;
		color: #84929a;
		font-size: 8px;
	}

	.num.major {
		color: #b4c0c6;
		font-size: 9px;
		font-weight: 500;
	}

	.num.inrange {
		color: #e8b4b4;
	}

	.marker {
		bottom: 0;
		overflow: hidden;
		line-height: 14px;
		font-size: 8px;
		white-space: nowrap;
		background: #39454c;
	}

	.flag {
		bottom: 0;
		width: 14px;
		background: #48555c;
		clip-path: polygon(0 0, 50% 0, 100% 100%, 0 100%);
		color: #f2f6f8;
		font-size: 10px;
		font-weight: 500;
		line-height: 14px;
	}

	.flag.red {
		background: #d08488;
	}

	.head {
		position: absolute;
		top: 1px;
		left: calc(100% * 19 / 93.77 - 6px);
	}

	.tracks {
		position: relative;
		background: #2b3943;
	}

	.grid {
		position: absolute;
		top: 0;
		left: 89px;
		width: calc(100% - 89px);
		height: 100%;
		background: #35444e;
	}

	.trackrow {
		position: relative;
		display: flex;
		box-sizing: border-box;
		border-bottom: 1px solid #1c2a34;
	}

	.thead {
		display: flex;
		align-items: center;
		flex: none;
		position: relative;
		box-sizing: border-box;
		width: 80px;
		margin: 0 9px -1px 0;
		padding: 0 3px 0 1px;
		border-radius: 0 5px 5px 0;
		font: 9px 'Roboto', sans-serif;
		white-space: nowrap;
		box-shadow: inset 0 -1px rgba(0, 0, 0, 0.15);
	}

	.thead span {
		flex: 1;
		min-width: 0;
	}

	.thead i {
		margin-right: 4px;
	}

	.thead i.black {
		color: #000;
	}

	.thead.plain {
		background: #4a5458;
		color: #7b868a;
	}

	.thead.tall {
		align-items: flex-end;
		padding-bottom: 2px;
	}

	.thead.tall span {
		align-self: flex-start;
		padding-top: 2px;
	}

	.thead small {
		position: absolute;
		left: 12px;
		bottom: 1px;
	}

	.emblem {
		position: absolute;
		top: 34px;
		left: 17px;
	}

	.led {
		flex: none;
		width: 5px;
		height: 5px;
		border: 2px solid #3b6a2c;
		border-radius: 50%;
		background: #b6f07a;
	}

	.lane {
		position: relative;
		flex: 1;
		min-width: 0;
		font: 500 9px 'Roboto', sans-serif;
	}

	.auto {
		display: flex;
		align-items: center;
		gap: 2px;
		height: 15px;
		padding-left: 1px;
		background: linear-gradient(#1280cc, #066cb8);
		color: #cfe4f4;
	}

	.audio {
		display: flex;
		flex-direction: column;
		height: 103px;
		background: #0c646a;
	}

	.names {
		display: flex;
		height: 14px;
		background: linear-gradient(#14bcc0, #08a8ae);
		color: #06383c;
		line-height: 14px;
	}

	.names span {
		display: flex;
		align-items: center;
		flex: none;
		gap: 2px;
		padding-left: 1px;
		box-sizing: border-box;
	}

	.names span :global(svg) {
		color: #b4ffff;
	}

	.audio > svg {
		width: 100%;
		height: 89px;
	}

	.gain {
		position: absolute;
		bottom: 10px;
		padding: 0 4px;
		border-radius: 4px;
		background: rgba(112, 140, 142, 0.9);
		color: #fff;
		line-height: 16px;
	}

	.clip {
		position: absolute;
		top: 0;
		bottom: 0;
		display: flex;
		align-items: center;
		box-sizing: border-box;
		overflow: hidden;
		gap: 2px;
		padding-left: 1px;
		border-radius: 1px;
		background-image: linear-gradient(90deg, transparent 40%, rgba(255, 90, 200, 0.25));
		box-shadow: inset 0 0 0 1px rgba(0, 0, 0, 0.25);
		color: #ffe0f6;
		white-space: nowrap;
	}

	.clip.muted {
		padding-left: 2px;
		background: #463a54;
		color: #a4a2b4;
	}

	.clip.muted.sliver {
		background: #5a3c62;
	}

	.clip.blue {
		background: #3a4156;
	}

	.overlay {
		position: absolute;
		inset: 0 0 0 89px;
		pointer-events: none;
	}

	.playhead {
		width: 1px;
		height: 100%;
		margin-left: calc(100% * 19 / 93.77);
		background: rgba(170, 190, 205, 0.5);
	}

	.vscroll {
		flex: none;
		width: 17px;
		background: #30393e;
		text-align: center;
	}

	.vscroll button, .vscroll div {
		display: block;
		width: 17px;
		height: 15px;
		margin-bottom: 1px;
		background: #4d575d;
		line-height: 15px;
	}

	.vscroll .dot {
		color: #20282c;
		font-size: 8px;
	}

	.vscroll div {
		height: 25px;
		line-height: 25px;
		color: #78828a;
	}

	/* plugin window */
	.plugin {
		position: absolute;
		top: 311px;
		left: 907px;
		width: 486px;
		box-sizing: border-box;
		padding: 0 3px 3px;
		background: #424a4d;
		box-shadow: 0 0 4px rgba(0, 0, 0, 0.5);
		font-family: 'Noto Sans', sans-serif;
	}

	.plugbar {
		display: flex;
		align-items: center;
		gap: 6px;
		height: 20px;
		padding-left: 3px;
		color: #949ea2;
		font-size: 9px;
	}

	.plugbar b {
		font-weight: 400;
		color: #a4adb0;
	}

	.plugbar span {
		color: #737d81;
	}

	.plugbar div {
		display: flex;
		align-items: center;
		gap: 8px;
		margin-left: auto;
		padding-right: 4px;
	}

	.plugbar i {
		padding: 1px;
		border: 1px solid #949ea2;
		border-radius: 3px;
	}

	.face {
		padding: 20px 24px 3px;
		background: linear-gradient(#8eabc9, #6e8cb3 50%, #587699);
		text-align: center;
	}

	.face h2 {
		font: 700 18px/28px 'DejaVu Sans', sans-serif;
		color: #fff;
	}

	.tag {
		margin-bottom: 17px;
		color: #d0deec;
		line-height: 20px;
	}

	.card {
		display: flex;
		flex-direction: column;
		align-items: center;
		box-sizing: border-box;
		padding: 6px 18px 3px;
		border: 1px solid #48708c;
		border-radius: 10px;
		background: linear-gradient(#3f6079, #25496a 25%, #1c3d56 60%, #16324e);
		color: #e2ecf2;
	}

	.load {
		width: 161px;
		height: 28px;
		border: 1px solid #8a98a8;
		border-radius: 5px;
		background: #748fb2;
		color: #f4f8fa;
		font-size: 11px;
		font-weight: 500;
	}

	.file {
		height: 20px;
		color: #bccad4;
		font-size: 11px;
		line-height: 12px;
	}

	.preview {
		width: 367px;
		height: 40px;
		border-left: 1px solid #a89c50;
		border-radius: 0 6px 6px 0;
		background: #142a42;
		fill: #dcecf8;
	}

	.preview svg {
		display: block;
		width: 100%;
		height: 100%;
	}

	.play {
		display: flex;
		align-items: center;
		gap: 8px;
		margin: 8px 0 6px;
	}

	.play button {
		box-sizing: border-box;
		width: 36px;
		height: 18px;
		border: 1px solid #7aa894;
		border-radius: 5px;
		background: #529c72;
	}

	.play .go {
		width: 64px;
		border-color: #66747c;
		background: #26323a;
	}

	.play .sync {
		height: 15px;
		border-color: #d8b860;
		background: #d8ac3c;
		font-size: 8px;
		line-height: 10px;
	}

	.pick {
		position: relative;
	}

	.pick select {
		appearance: none;
		width: 161px;
		height: 25px;
		padding: 0 4px;
		border: 1px solid #66849c;
		border-radius: 3px;
		background: #385f82;
		color: #eaf2f6;
		font: inherit;
		font-size: 11px;
	}

	.pick svg {
		position: absolute;
		top: 9px;
		right: 9px;
		fill: none;
		stroke: #fff;
		stroke-width: 1.6;
		pointer-events: none;
	}

	.analyze {
		width: 121px;
		height: 29px;
		margin: 7px 0 14px;
		border: 1px solid #c8b468;
		border-radius: 6px;
		background: linear-gradient(#e0b854, #c49a30);
		font-size: 11px;
		font-weight: 500;
	}

	.card h3 {
		font-size: 11px;
		line-height: 16px;
	}

	dl {
		display: grid;
		grid-template-columns: repeat(5, 80px);
		margin: 5px 0 8px;
	}

	dt, dd {
		line-height: 20px;
	}

	dt {
		color: #8caac4;
	}

	dd {
		font-weight: 500;
	}

	.why {
		box-sizing: border-box;
		width: 393px;
		height: 90px;
		padding: 16px 4px 0;
		border: 1px solid #607884;
		border-radius: 2px;
		background: #142434;
		line-height: 11px;
		text-align: left;
	}

	.why p + p {
		margin-top: 11px;
	}

	.metrics {
		width: 97px;
		height: 17px;
		margin-top: 2px;
		border: 1px solid #5a7c92;
		border-radius: 6px;
		background: #254a68;
		font-size: 8px;
		font-weight: 600;
	}

	.by {
		margin-top: 7px;
		color: #c4d2e0;
		font-size: 8px;
		line-height: 18px;
	}

	.dragged {
		position: absolute;
		top: 452px;
		left: 929px;
		width: 108px;
		height: 22px;
		background-color: #b22c90;
		color: #fff;
		transform: rotate(2deg);
	}

	.cursor {
		position: absolute;
		top: 422px;
		left: 963px;
	}
</style>
